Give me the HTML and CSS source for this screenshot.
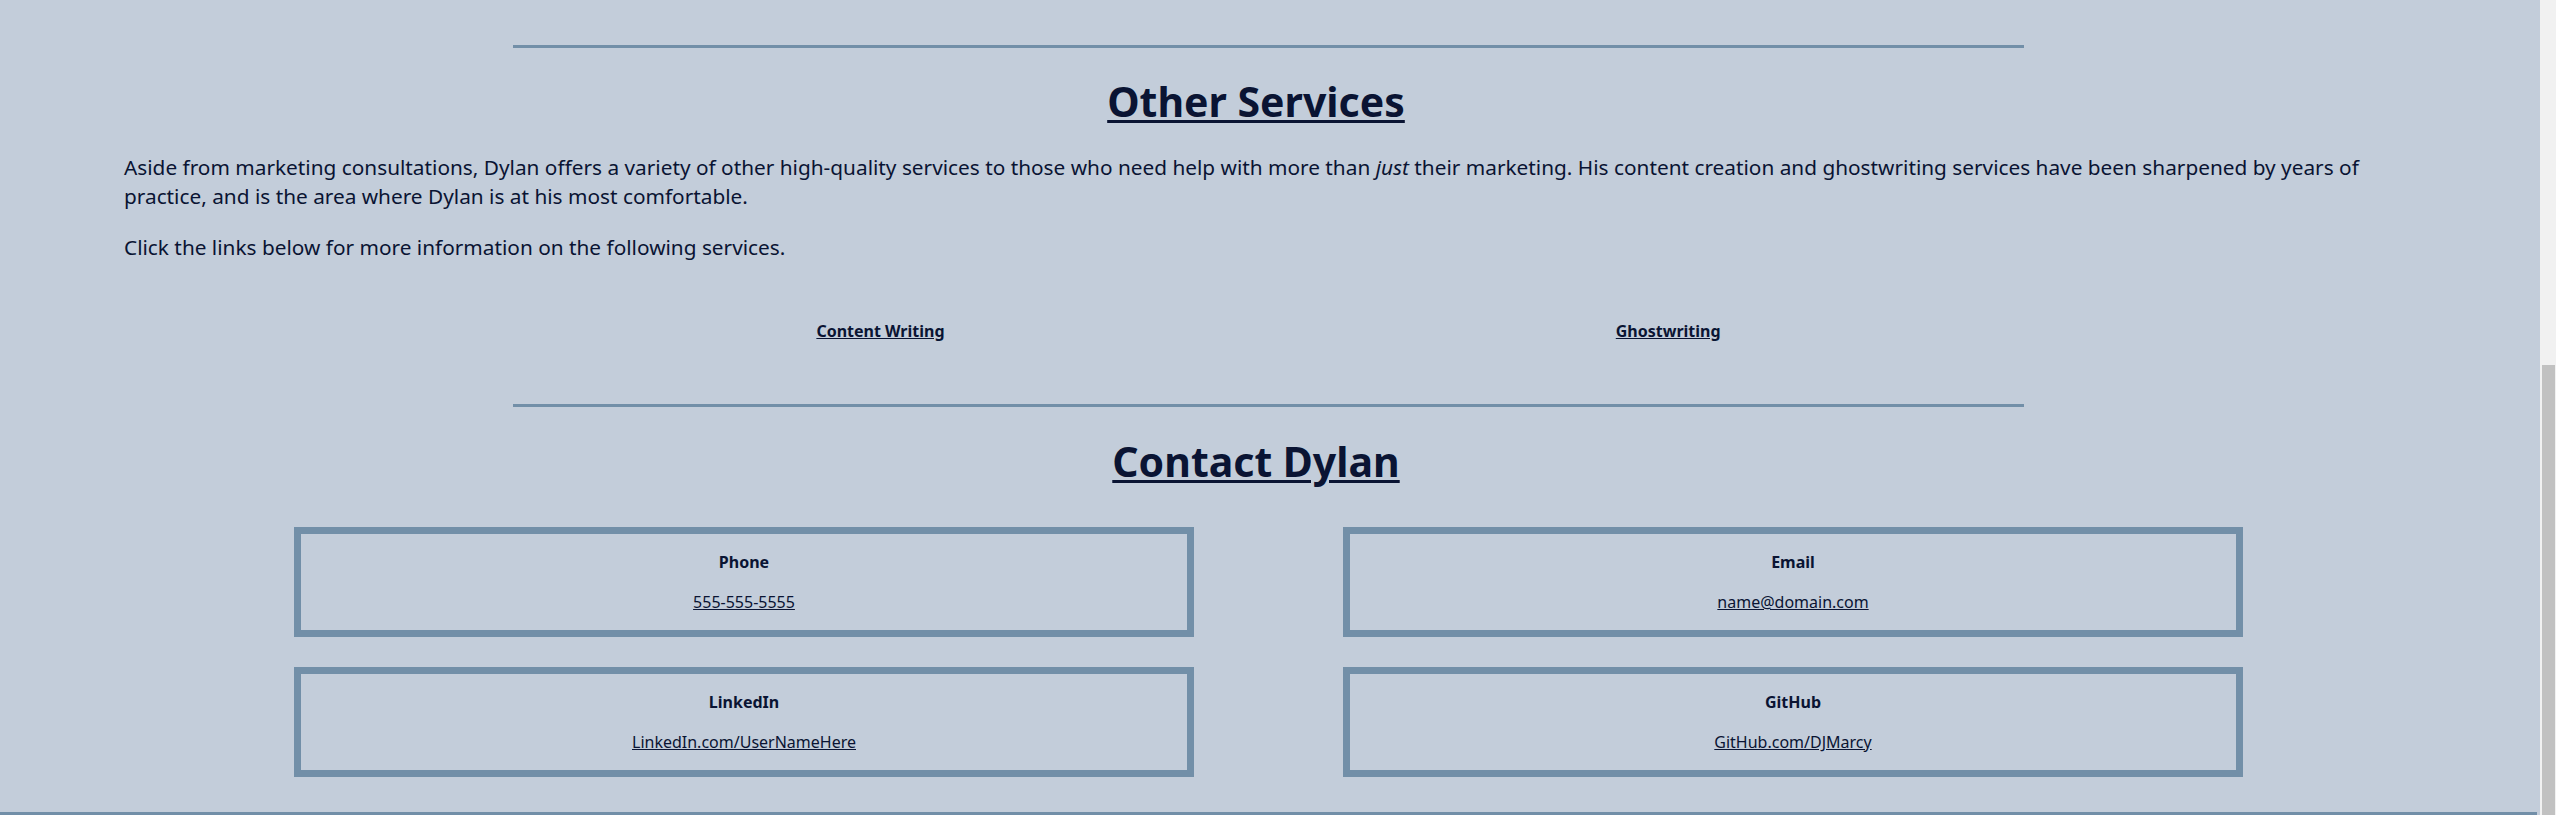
FILE: index.html
```html
<!DOCTYPE html>
<html lang="en">
<head>
<meta charset="utf-8">
<title>Dylan Marcy - Services</title>
<link rel="stylesheet" href="styles.css">
</head>
<body>
<div class="viewport">
  <main class="page">
    <section class="section services">
      <hr class="divider">
      <h2 class="section-title">Other Services</h2>
      <div class="copy">
        <p>Aside from marketing consultations, Dylan offers a variety of other high-quality services to those who need help with more than <em>just</em> their marketing. His content creation and ghostwriting services have been sharpened by years of practice, and is the area where Dylan is at his most comfortable.</p>
        <p>Click the links below for more information on the following services.</p>
      </div>
      <nav class="service-links">
        <a href="#content">Content Writing</a>
        <a href="#ghost">Ghostwriting</a>
      </nav>
    </section>
    <section class="section contact">
      <hr class="divider">
      <h2 class="section-title">Contact Dylan</h2>
      <div class="contact-grid">
        <div class="card"><h3 class="card-label">Phone</h3><a class="card-link" href="#">555-555-5555</a></div>
        <div class="card"><h3 class="card-label">Email</h3><a class="card-link" href="#">name@domain.com</a></div>
        <div class="card"><h3 class="card-label">LinkedIn</h3><a class="card-link" href="#">LinkedIn.com/UserNameHere</a></div>
        <div class="card"><h3 class="card-label">GitHub</h3><a class="card-link" href="#">GitHub.com/DJMarcy</a></div>
      </div>
    </section>
    <footer class="footer"></footer>
  </main>
  <div class="scrollbar"><div class="thumb"></div></div>
</div>
</body>
</html>
```

FILE: styles.css
```css
html, body { margin: 0; padding: 0; }
body {
  background: #c3cdda;
  color: #0a1433;
  font-family: "Noto Sans", "DejaVu Sans", sans-serif;
  overflow: hidden;
}
.viewport {
  display: grid;
  grid-template-columns: 1fr 16px;
  height: 815px;
  overflow: hidden;
}
.page {
  display: flex;
  flex-direction: column;
  padding: 45px 3px 0 0;
  min-width: 0;
}
.divider {
  width: 59.56%;
  margin: 0 auto;
  border: 0;
  border-top: 3px solid #728fa8;
  height: 0;
}
.section-title {
  font-size: 41px;
  font-weight: bold;
  line-height: 49.2px;
  text-align: center;
  text-decoration: underline;
  text-decoration-thickness: 3px;
  text-underline-offset: 3px;
  margin: 28.5px 0 0;
  padding-right: 25px;
  color: #0a1433;
}
.copy { padding: 0 124px; margin-top: 27.7px; }
.copy p { font-size: 20.8px; line-height: 29px; margin: 0; }
.copy p + p { margin-top: 22px; }
.service-links {
  width: 62.1%;
  margin: 57.4px auto 0;
  display: flex;
  justify-content: space-around;
  line-height: 22px;
}
.service-links a { color: #0a1433; font-size: 16px; font-weight: bold; }
.contact .divider { margin-top: 62.2px; }
.contact .section-title { margin-top: 30.5px; }
.contact-grid {
  display: grid;
  grid-template-columns: 900px 900px;
  column-gap: 149px;
  row-gap: 30px;
  justify-content: center;
  margin-top: 40.3px;
}
.card {
  border: 7px solid #728fa8;
  height: 96px;
  text-align: center;
}
.card-label { font-size: 16px; font-weight: bold; line-height: 22px; margin: 16.8px 0 0; }
.card-link { display: inline-block; margin-top: 18px; color: #0a1433; font-size: 16px; line-height: 22px; }
.footer { margin-top: auto; border-top: 3px solid #728fa8; }
.scrollbar {
  background: #f1f1f1;
  display: flex;
  flex-direction: column;
  justify-content: flex-end;
  padding: 0 1px 0 2px;
}
.thumb { height: 450px; background: #c1c1c1; }
```
